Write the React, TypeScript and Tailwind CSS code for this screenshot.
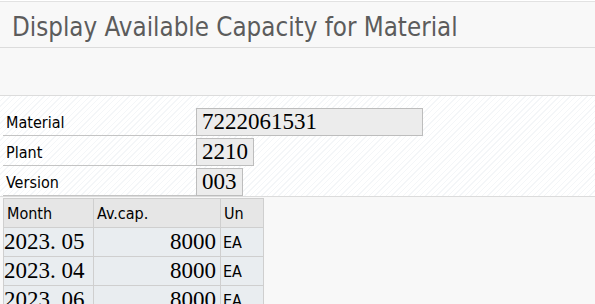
const hatch =
  "bg-[repeating-linear-gradient(135deg,#ffffff_0px,#ffffff_3px,#f4f6f8_3px,#f4f6f8_4px)]";

const rows = [
  { month: "2023. 05", cap: "8000", un: "EA" },
  { month: "2023. 04", cap: "8000", un: "EA" },
  { month: "2023. 06", cap: "8000", un: "EA" },
];

function Field({ label, value, width }: { label: string; value: string; width: string }) {
  return (
    <div className="flex h-[30px] items-start">
      <div className="w-[193px] h-[30px] ml-[3px] border-b border-[#c4c4c4] pl-[3px] pt-[4px] flex items-center text-[16px] text-black">
        {label}
      </div>
      <div
        className={`${width} h-[28px] mt-[2px] border border-[#bdbdbd] bg-[#ececec] pl-[5px] flex items-center font-['Liberation_Serif',serif] text-[23px] text-black`}
      >
        {value}
      </div>
    </div>
  );
}

export default function App() {
  return (
    <div className="w-[595px] h-[304px] overflow-hidden bg-white font-['DejaVu_Sans_Condensed','DejaVu_Sans',sans-serif]">
      <div className="h-[1px] bg-white" />
      <div className="h-[1px] bg-[#e2e2e2]" />
      <div className="h-[46px] bg-[#f8f8f8] border-b border-[#dcdcdc] flex items-center pl-[12px] pt-[5px] text-[25.7px] text-[#5c5c5c]">
        Display Available Capacity for Material
      </div>
      <div className="h-[48px] bg-[#f8f8f8] border-b border-[#dcdcdc]" />
      <div className={`${hatch} pt-[10px]`}>
        <div className="flex flex-col">
          <Field label="Material" value="7222061531" width="w-[227px]" />
          <Field label="Plant" value="2210" width="w-[58px]" />
          <Field label="Version" value="003" width="w-[47px]" />
        </div>
      </div>
      <div className="border-t border-[#dcdcdc] bg-[#f8f8f8] pt-[1px] pl-[3px]">
        <div className="w-[261px] border-l border-t border-[#cfcfcf]">
          <div className="flex h-[29px] bg-[#e6e6e6] border-b border-[#cfcfcf] text-[16px] text-black">
            <div className="w-[90px] border-r border-[#cfcfcf] pl-[3px] pt-[2px] flex items-center">Month</div>
            <div className="w-[127px] border-r border-[#cfcfcf] pl-[3px] pt-[2px] flex items-center">Av.cap.</div>
            <div className="w-[43px] border-r border-[#cfcfcf] pl-[3px] pt-[2px] flex items-center">Un</div>
          </div>
          {rows.map((r) => (
            <div key={r.month} className="flex h-[29px] bg-[#e9edf0] border-b border-[#cfcfcf]">
              <div className="w-[90px] border-r border-[#cfcfcf] flex items-center font-['Liberation_Serif',serif] text-[23px] text-black">
                {r.month}
              </div>
              <div className="w-[127px] border-r border-[#cfcfcf] pr-[4px] flex items-center justify-end font-['Liberation_Serif',serif] text-[23px] text-black">
                {r.cap}
              </div>
              <div className="w-[43px] border-r border-[#cfcfcf] pl-[2px] pt-[2px] flex items-center text-[16px] text-black">
                {r.un}
              </div>
            </div>
          ))}
        </div>
      </div>
    </div>
  );
}
